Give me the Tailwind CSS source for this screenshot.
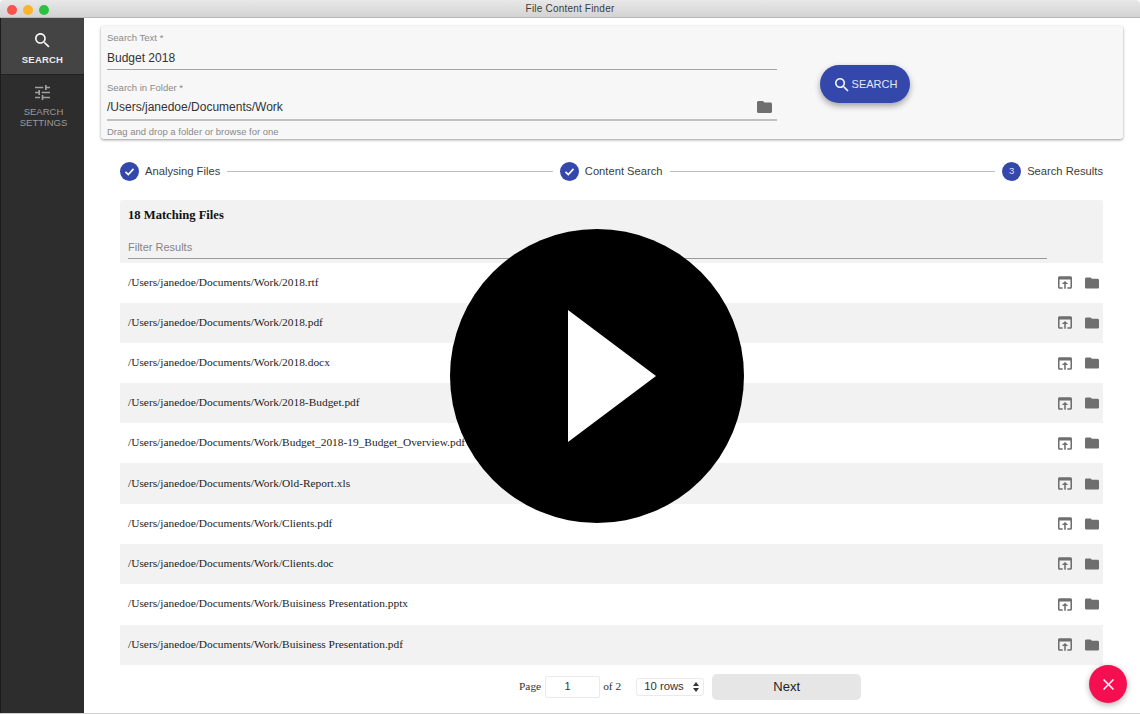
<!DOCTYPE html>
<html lang="en">
<head>
    <meta charset="UTF-8">
    <title>File Content Finder</title>
    <script src="https://cdn.jsdelivr.net/npm/@tailwindcss/browser@4"></script>
</head>
<body class="bg-white font-['Liberation_Sans',sans-serif] overflow-hidden">
    <div class="relative w-[1140px] h-[714px] overflow-hidden flex flex-col border-b border-[#d0d0d0]">
        <!-- title bar -->
        <div class="relative h-[18px] shrink-0 flex items-center justify-center bg-gradient-to-b from-[#e8e8e8] to-[#d3d3d3] border-b border-[#b8b8b8] rounded-t-[4px]">
            <div class="absolute left-[7px] top-[4.5px] flex gap-[6px]">
                <span class="w-[10px] h-[10px] rounded-full bg-[#f9534e]"></span>
                <span class="w-[10px] h-[10px] rounded-full bg-[#fcb42c]"></span>
                <span class="w-[10px] h-[10px] rounded-full bg-[#2cc23f]"></span>
            </div>
            <span class="text-[10px] leading-none text-[#3c3c3c] tracking-[0.2px]">File Content Finder</span>
        </div>

        <div class="flex flex-1 min-h-0">
            <!-- sidebar -->
            <div class="w-[84px] shrink-0 bg-[#2d2d2d] border-l border-[#1c1c1c]">
                <div class="h-[57px] bg-[#444444] border-b border-[#222222] flex flex-col items-center pt-[15px]">
                    <svg class="w-[15px] h-[15px]" viewBox="3 3 18 18" fill="#f2f2f2"><path d="M15.5 14h-.79l-.28-.27C15.41 12.59 16 11.11 16 9.5 16 5.91 13.09 3 9.5 3S3 5.91 3 9.5 5.91 16 9.5 16c1.61 0 3.09-.59 4.23-1.57l.27.28v.79l5 4.99L20.49 19l-4.99-5zm-6 0C7.01 14 5 11.99 5 9.5S7.01 5 9.5 5 14 7.01 14 9.5 11.99 14 9.5 14z"/></svg>
                    <span class="mt-[6px] text-[9.5px] leading-[12px] font-bold text-[#ededed] tracking-[0.2px]">SEARCH</span>
                </div>
                <div class="flex flex-col items-center pt-[10px]">
                    <svg class="w-[15px] h-[15px]" viewBox="3 3 18 18" fill="#a0a0a0"><path d="M3 17v2h6v-2H3zM3 5v2h10V5H3zm10 16v-2h8v-2h-8v-2h-2v6h2zM7 9v2H3v2h4v2h2V9H7zm14 4v-2H11v2h10zm-6-4h2V7h4V5h-4V3h-2v6z"/></svg>
                    <span class="mt-[6px] ml-[2px] text-[9.5px] leading-[11px] text-[#9a9a9a] text-center">SEARCH<br>SETTINGS</span>
                </div>
            </div>

            <!-- main -->
            <div class="flex-1 min-w-0 pl-[17px] pr-[17px] pt-[8px]">
                <!-- search panel -->
                <div class="w-[1022px] h-[113px] bg-[#f7f7f7] rounded-[3px] shadow-[0_1px_3px_rgba(0,0,0,0.4)] flex pl-[6px]">
                    <div class="w-[670px] shrink-0">
                        <div class="h-[44px] pt-[6px] border-b border-[#a5a5a5]">
                            <div class="text-[9.5px] leading-[11px] text-[#8a8a8a]">Search Text *</div>
                            <div class="mt-[7px] text-[12px] leading-[16px] text-[#333333]">Budget 2018</div>
                        </div>
                        <div class="h-[51px] pt-[12px] border-b-2 border-[#c0c0c0]">
                            <div class="text-[9.5px] leading-[11px] text-[#8a8a8a]">Search in Folder *</div>
                            <div class="mt-[6px] flex items-center justify-between pr-[5px]">
                                <span class="text-[12px] leading-[16px] text-[#333333]">/Users/janedoe/Documents/Work</span>
                                <svg class="w-[15px] h-[12px]" viewBox="2 4 20 16" fill="#6f6f6f"><path d="M10 4H4c-1.1 0-1.99.9-1.99 2L2 18c0 1.1.9 2 2 2h16c1.1 0 2-.9 2-2V8c0-1.1-.9-2-2-2h-8l-2-2z"/></svg>
                            </div>
                        </div>
                        <div class="mt-[5px] text-[9.5px] leading-[11px] text-[#8a8a8a]">Drag and drop a folder or browse for one</div>
                    </div>
                    <div class="ml-[43px] mt-[39px] w-[90px] h-[38px] pt-[1px] pl-[2px] rounded-full bg-[#3447ab] shadow-[0_3px_6px_rgba(0,0,0,0.35)] flex items-center justify-center gap-[3px]">
                        <svg class="w-[14px] h-[14px]" viewBox="3 3 18 18" fill="#f4f4fb"><path d="M15.5 14h-.79l-.28-.27C15.41 12.59 16 11.11 16 9.5 16 5.91 13.09 3 9.5 3S3 5.91 3 9.5 5.91 16 9.5 16c1.61 0 3.09-.59 4.23-1.57l.27.28v.79l5 4.99L20.49 19l-4.99-5zm-6 0C7.01 14 5 11.99 5 9.5S7.01 5 9.5 5 14 7.01 14 9.5 11.99 14 9.5 14z"/></svg>
                        <span class="text-[11px] leading-none text-[#e6e8f5]">SEARCH</span>
                    </div>
                </div>

                <!-- stepper -->
                <div class="w-[983px] ml-[19px] mt-[22px] h-[20px] flex items-center text-[11.2px] text-[#3c3c3c]">
                    <span class="w-[19px] h-[19px] rounded-full bg-[#3447ab] flex items-center justify-center shrink-0">
                        <svg class="w-[11px] h-[11px]" viewBox="0 0 11 11" fill="none" stroke="#ffffff" stroke-width="1.6"><path d="M1.5 5.8l2.8 2.7 5.2-5.6"/></svg>
                    </span>
                    <span class="ml-[6px] pt-[1px]">Analysing Files</span>
                    <span class="flex-1 mx-[7px] h-px bg-[#bdbdbd]"></span>
                    <span class="w-[19px] h-[19px] rounded-full bg-[#3447ab] flex items-center justify-center shrink-0">
                        <svg class="w-[11px] h-[11px]" viewBox="0 0 11 11" fill="none" stroke="#ffffff" stroke-width="1.6"><path d="M1.5 5.8l2.8 2.7 5.2-5.6"/></svg>
                    </span>
                    <span class="ml-[6px] pt-[1px]">Content Search</span>
                    <span class="flex-1 mx-[7px] h-px bg-[#bdbdbd]"></span>
                    <span class="w-[19px] h-[19px] rounded-full bg-[#3447ab] flex items-center justify-center shrink-0 text-[9.5px] text-[#dfe2f3]">3</span>
                    <span class="ml-[6px] pt-[1px]">Search Results</span>
                </div>

                <!-- results -->
                <div class="w-[983px] ml-[19px] mt-[19px] font-['Liberation_Serif',serif]">
                    <div class="h-[63px] bg-[#f2f2f2] pl-[8px] pr-[56px] rounded-t-[2px]">
                        <div class="pt-[7px] text-[12.6px] leading-[16px] font-bold text-[#111111]">18 Matching Files</div>
                        <div class="mt-[17px] h-[19px] border-b border-[#9a9a9a] font-['Liberation_Sans',sans-serif] text-[11px] leading-[14px] text-[#858585]">Filter Results</div>
                    </div>

                    <div class="h-[40px] pb-[1px] flex items-center pl-[8px] pr-[4px] text-[11.4px] text-[#222222]">
                        <span class="flex-1">/Users/janedoe/Documents/Work/2018.rtf</span>
                        <svg class="w-[14px] h-[13px]" viewBox="3 4 18 16" fill="#6f6f6f"><path d="M19 4H5c-1.11 0-2 .9-2 2v12c0 1.1.89 2 2 2h4v-2H5V8h14v10h-4v2h4c1.1 0 2-.9 2-2V6c0-1.1-.89-2-2-2zm-7 6l-4 4h3v6h2v-6h3l-4-4z"/></svg>
                        <svg class="ml-[13px] w-[14px] h-[12px]" viewBox="2 4 20 16" fill="#6f6f6f"><path d="M10 4H4c-1.1 0-1.99.9-1.99 2L2 18c0 1.1.9 2 2 2h16c1.1 0 2-.9 2-2V8c0-1.1-.9-2-2-2h-8l-2-2z"/></svg>
                    </div>
                    <div class="h-[40px] pb-[1px] flex items-center pl-[8px] pr-[4px] text-[11.4px] text-[#222222] bg-[#f2f2f2]">
                        <span class="flex-1">/Users/janedoe/Documents/Work/2018.pdf</span>
                        <svg class="w-[14px] h-[13px]" viewBox="3 4 18 16" fill="#6f6f6f"><path d="M19 4H5c-1.11 0-2 .9-2 2v12c0 1.1.89 2 2 2h4v-2H5V8h14v10h-4v2h4c1.1 0 2-.9 2-2V6c0-1.1-.89-2-2-2zm-7 6l-4 4h3v6h2v-6h3l-4-4z"/></svg>
                        <svg class="ml-[13px] w-[14px] h-[12px]" viewBox="2 4 20 16" fill="#6f6f6f"><path d="M10 4H4c-1.1 0-1.99.9-1.99 2L2 18c0 1.1.9 2 2 2h16c1.1 0 2-.9 2-2V8c0-1.1-.9-2-2-2h-8l-2-2z"/></svg>
                    </div>
                    <div class="h-[40px] flex items-center pl-[8px] pr-[4px] text-[11.4px] text-[#222222]">
                        <span class="flex-1">/Users/janedoe/Documents/Work/2018.docx</span>
                        <svg class="w-[14px] h-[13px]" viewBox="3 4 18 16" fill="#6f6f6f"><path d="M19 4H5c-1.11 0-2 .9-2 2v12c0 1.1.89 2 2 2h4v-2H5V8h14v10h-4v2h4c1.1 0 2-.9 2-2V6c0-1.1-.89-2-2-2zm-7 6l-4 4h3v6h2v-6h3l-4-4z"/></svg>
                        <svg class="ml-[13px] w-[14px] h-[12px]" viewBox="2 4 20 16" fill="#6f6f6f"><path d="M10 4H4c-1.1 0-1.99.9-1.99 2L2 18c0 1.1.9 2 2 2h16c1.1 0 2-.9 2-2V8c0-1.1-.9-2-2-2h-8l-2-2z"/></svg>
                    </div>
                    <div class="h-[40px] flex items-center pl-[8px] pr-[4px] text-[11.4px] text-[#222222] bg-[#f2f2f2]">
                        <span class="flex-1">/Users/janedoe/Documents/Work/2018-Budget.pdf</span>
                        <svg class="w-[14px] h-[13px]" viewBox="3 4 18 16" fill="#6f6f6f"><path d="M19 4H5c-1.11 0-2 .9-2 2v12c0 1.1.89 2 2 2h4v-2H5V8h14v10h-4v2h4c1.1 0 2-.9 2-2V6c0-1.1-.89-2-2-2zm-7 6l-4 4h3v6h2v-6h3l-4-4z"/></svg>
                        <svg class="ml-[13px] w-[14px] h-[12px]" viewBox="2 4 20 16" fill="#6f6f6f"><path d="M10 4H4c-1.1 0-1.99.9-1.99 2L2 18c0 1.1.9 2 2 2h16c1.1 0 2-.9 2-2V8c0-1.1-.9-2-2-2h-8l-2-2z"/></svg>
                    </div>
                    <div class="h-[40px] flex items-center pl-[8px] pr-[4px] text-[11.4px] text-[#222222]">
                        <span class="flex-1">/Users/janedoe/Documents/Work/Budget_2018-19_Budget_Overview.pdf</span>
                        <svg class="w-[14px] h-[13px]" viewBox="3 4 18 16" fill="#6f6f6f"><path d="M19 4H5c-1.11 0-2 .9-2 2v12c0 1.1.89 2 2 2h4v-2H5V8h14v10h-4v2h4c1.1 0 2-.9 2-2V6c0-1.1-.89-2-2-2zm-7 6l-4 4h3v6h2v-6h3l-4-4z"/></svg>
                        <svg class="ml-[13px] w-[14px] h-[12px]" viewBox="2 4 20 16" fill="#6f6f6f"><path d="M10 4H4c-1.1 0-1.99.9-1.99 2L2 18c0 1.1.9 2 2 2h16c1.1 0 2-.9 2-2V8c0-1.1-.9-2-2-2h-8l-2-2z"/></svg>
                    </div>
                    <div class="h-[41px] flex items-center pl-[8px] pr-[4px] text-[11.4px] text-[#222222] bg-[#f2f2f2]">
                        <span class="flex-1">/Users/janedoe/Documents/Work/Old-Report.xls</span>
                        <svg class="w-[14px] h-[13px]" viewBox="3 4 18 16" fill="#6f6f6f"><path d="M19 4H5c-1.11 0-2 .9-2 2v12c0 1.1.89 2 2 2h4v-2H5V8h14v10h-4v2h4c1.1 0 2-.9 2-2V6c0-1.1-.89-2-2-2zm-7 6l-4 4h3v6h2v-6h3l-4-4z"/></svg>
                        <svg class="ml-[13px] w-[14px] h-[12px]" viewBox="2 4 20 16" fill="#6f6f6f"><path d="M10 4H4c-1.1 0-1.99.9-1.99 2L2 18c0 1.1.9 2 2 2h16c1.1 0 2-.9 2-2V8c0-1.1-.9-2-2-2h-8l-2-2z"/></svg>
                    </div>
                    <div class="h-[40px] pb-[1px] flex items-center pl-[8px] pr-[4px] text-[11.4px] text-[#222222]">
                        <span class="flex-1">/Users/janedoe/Documents/Work/Clients.pdf</span>
                        <svg class="w-[14px] h-[13px]" viewBox="3 4 18 16" fill="#6f6f6f"><path d="M19 4H5c-1.11 0-2 .9-2 2v12c0 1.1.89 2 2 2h4v-2H5V8h14v10h-4v2h4c1.1 0 2-.9 2-2V6c0-1.1-.89-2-2-2zm-7 6l-4 4h3v6h2v-6h3l-4-4z"/></svg>
                        <svg class="ml-[13px] w-[14px] h-[12px]" viewBox="2 4 20 16" fill="#6f6f6f"><path d="M10 4H4c-1.1 0-1.99.9-1.99 2L2 18c0 1.1.9 2 2 2h16c1.1 0 2-.9 2-2V8c0-1.1-.9-2-2-2h-8l-2-2z"/></svg>
                    </div>
                    <div class="h-[40px] pb-[1px] flex items-center pl-[8px] pr-[4px] text-[11.4px] text-[#222222] bg-[#f2f2f2]">
                        <span class="flex-1">/Users/janedoe/Documents/Work/Clients.doc</span>
                        <svg class="w-[14px] h-[13px]" viewBox="3 4 18 16" fill="#6f6f6f"><path d="M19 4H5c-1.11 0-2 .9-2 2v12c0 1.1.89 2 2 2h4v-2H5V8h14v10h-4v2h4c1.1 0 2-.9 2-2V6c0-1.1-.89-2-2-2zm-7 6l-4 4h3v6h2v-6h3l-4-4z"/></svg>
                        <svg class="ml-[13px] w-[14px] h-[12px]" viewBox="2 4 20 16" fill="#6f6f6f"><path d="M10 4H4c-1.1 0-1.99.9-1.99 2L2 18c0 1.1.9 2 2 2h16c1.1 0 2-.9 2-2V8c0-1.1-.9-2-2-2h-8l-2-2z"/></svg>
                    </div>
                    <div class="h-[41px] pb-[1px] flex items-center pl-[8px] pr-[4px] text-[11.4px] text-[#222222]">
                        <span class="flex-1">/Users/janedoe/Documents/Work/Buisiness Presentation.pptx</span>
                        <svg class="w-[14px] h-[13px]" viewBox="3 4 18 16" fill="#6f6f6f"><path d="M19 4H5c-1.11 0-2 .9-2 2v12c0 1.1.89 2 2 2h4v-2H5V8h14v10h-4v2h4c1.1 0 2-.9 2-2V6c0-1.1-.89-2-2-2zm-7 6l-4 4h3v6h2v-6h3l-4-4z"/></svg>
                        <svg class="ml-[13px] w-[14px] h-[12px]" viewBox="2 4 20 16" fill="#6f6f6f"><path d="M10 4H4c-1.1 0-1.99.9-1.99 2L2 18c0 1.1.9 2 2 2h16c1.1 0 2-.9 2-2V8c0-1.1-.9-2-2-2h-8l-2-2z"/></svg>
                    </div>
                    <div class="h-[40px] pb-[1px] flex items-center pl-[8px] pr-[4px] text-[11.4px] text-[#222222] bg-[#f2f2f2]">
                        <span class="flex-1">/Users/janedoe/Documents/Work/Buisiness Presentation.pdf</span>
                        <svg class="w-[14px] h-[13px]" viewBox="3 4 18 16" fill="#6f6f6f"><path d="M19 4H5c-1.11 0-2 .9-2 2v12c0 1.1.89 2 2 2h4v-2H5V8h14v10h-4v2h4c1.1 0 2-.9 2-2V6c0-1.1-.89-2-2-2zm-7 6l-4 4h3v6h2v-6h3l-4-4z"/></svg>
                        <svg class="ml-[13px] w-[14px] h-[12px]" viewBox="2 4 20 16" fill="#6f6f6f"><path d="M10 4H4c-1.1 0-1.99.9-1.99 2L2 18c0 1.1.9 2 2 2h16c1.1 0 2-.9 2-2V8c0-1.1-.9-2-2-2h-8l-2-2z"/></svg>
                    </div>

                    <!-- pagination -->
                    <div class="mt-[8px] pl-[399px] h-[27px] flex items-center text-[11.4px] text-[#333333]">
                        <span>Page</span>
                        <span class="ml-[4px] w-[55px] h-[22px] pr-[10px] border border-[#eaeaea] rounded-[2px] flex items-center justify-center font-['Liberation_Sans',sans-serif] text-[11px]">1</span>
                        <span class="ml-[3px]">of 2</span>
                        <span class="ml-[15px] w-[68px] h-[18px] border border-[#eaeaea] rounded-[3px] flex items-center justify-between pl-[7px] pr-[4px] font-['Liberation_Sans',sans-serif] text-[11.3px]">
                            10 rows
                            <svg class="w-[6px] h-[10px]" viewBox="0 0 6 10" fill="#333333"><path d="M3 0l3 4H0zM3 10L0 6h6z"/></svg>
                        </span>
                        <span class="ml-[8px] w-[149px] h-[26px] bg-[#e6e6e6] rounded-[5px] flex items-center justify-center font-['Liberation_Sans',sans-serif] text-[13px] text-[#222222]">Next</span>
                    </div>
                </div>
            </div>
        </div>

        <!-- cancel fab -->
        <div class="absolute left-[1089px] top-[665px] w-[38px] h-[38px] rounded-full bg-[#f50f50] shadow-[0_2px_6px_rgba(0,0,0,0.3)] flex items-center justify-center">
            <svg class="w-[11px] h-[11px]" viewBox="5 5 14 14" fill="#ffffff"><path d="M19 6.41L17.59 5 12 10.59 6.41 5 5 6.41 10.59 12 5 17.59 6.41 19 12 13.41 17.59 19 19 17.59 13.41 12z"/></svg>
        </div>

        <!-- video play overlay -->
        <div class="absolute left-[450px] top-[229px] w-[294px] h-[294px] rounded-full bg-black">
            <svg class="absolute left-[118px] top-[81px] w-[88px] h-[132px]" viewBox="0 0 88 132" fill="#ffffff"><path d="M0 0l88 66L0 132z"/></svg>
        </div>
    </div>
</body>
</html>
